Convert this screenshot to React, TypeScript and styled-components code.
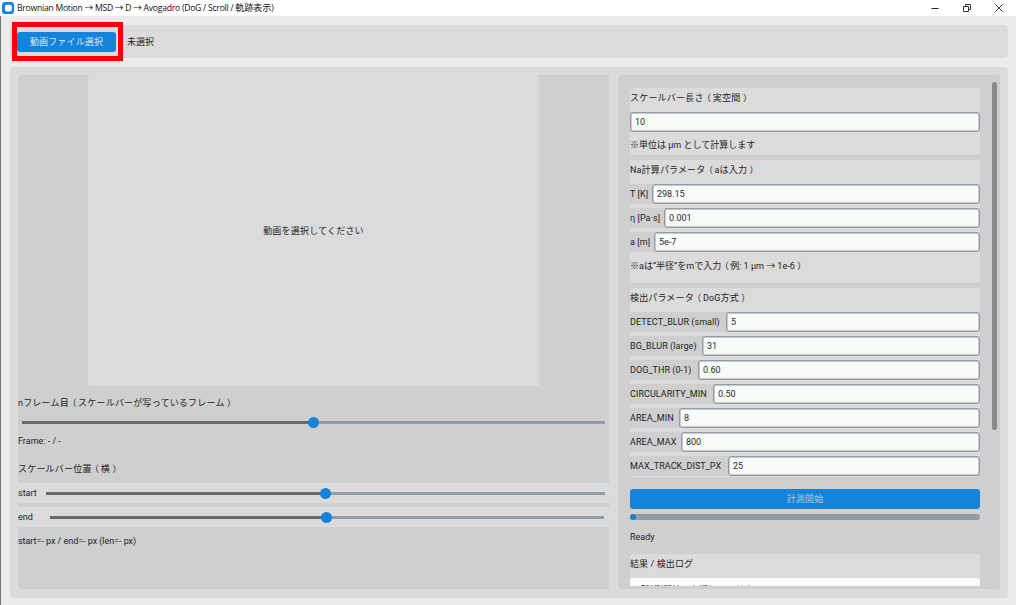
import React from 'react';
import styled, { createGlobalStyle } from 'styled-components';

const Global = createGlobalStyle`
  * { box-sizing: border-box; }
  body { margin: 0; background: #ebebeb; }
`;

const Window = styled.div`
  width: 1016px;
  height: 605px;
  overflow: hidden;
  display: flex;
  flex-direction: column;
  background: #ebebeb;
  color: #1c1f21;
  font: 9px/12px Roboto, "Noto Sans CJK JP", sans-serif;
  white-space: nowrap;
`;

const TitleBar = styled.header`
  height: 16px;
  flex: none;
  display: flex;
  align-items: center;
  background: #fff;
  padding: 0 13px 0 2px;
  gap: 3px;
`;

const Title = styled.h1`
  flex: 1;
  margin: 0;
  font: 400 8.6px/14px "Open Sans", "Noto Sans CJK JP", sans-serif;
  letter-spacing: -0.24px;
  color: #111;
`;

const TitleCjk = styled.span`
  font-size: 9px;
  letter-spacing: 0;
`;

const WindowButtons = styled.div`
  display: flex;
  gap: 24px;
  svg { display: block; }
`;

const Body = styled.main`
  flex: 1;
  display: flex;
  flex-direction: column;
  gap: 9px;
  padding: 9px 8px 7px 9px;
  border-left: 1px solid #747474;
`;

const TopBar = styled.section`
  height: 33px;
  flex: none;
  display: flex;
  align-items: center;
  gap: 4px;
  padding-left: 2px;
  border-radius: 4px;
  background: #dbdbdb;
`;

const Highlight = styled.div`
  width: 111px;
  height: 39px;
  flex: none;
  padding: 5px 2px 4px 0;
  border: 5px solid #fb0004;
  display: flex;
`;

const Button = styled.button<{ $dim?: boolean }>`
  flex: 1;
  height: 20px;
  border: 0;
  border-radius: 3px;
  padding: 0;
  background: #1583d9;
  color: ${p => (p.$dim ? '#b9c6d0' : '#dce9f4')};
  font: inherit;
  letter-spacing: 0.15px;
`;

const Panels = styled.section`
  height: 531px;
  display: flex;
  gap: 9px;
  padding: 8px 8px 9px;
  border-radius: 4px;
  background: #dbdbdb;
`;

const Viewer = styled.div`
  width: 591px;
  flex: none;
  display: flex;
  flex-direction: column;
  border-radius: 4px;
  background: #cfcfcf;
`;

const Preview = styled.div`
  width: 451px;
  height: 311px;
  margin-left: 70px;
  display: flex;
  align-items: center;
  justify-content: center;
  border-radius: 3px;
  background: #dbdbdb;
`;

const Text = styled.div<{ $h: number; $ls?: number }>`
  height: ${p => p.$h}px;
  line-height: ${p => p.$h}px;
  flex: none;
  letter-spacing: ${p => p.$ls ?? 0}px;
`;

const OpenParen = styled.span`
  margin: 0 1.5px 0 -1.5px;
`;

const CloseParen = styled.span`
  margin-left: 2.5px;
`;

const SliderRow = styled.div<{ $band?: boolean; $right: number }>`
  height: 20px;
  flex: none;
  display: flex;
  align-items: center;
  padding-right: ${p => p.$right}px;
  background: ${p => (p.$band ? '#dbdbdb' : 'transparent')};
`;

const SliderLabel = styled.span<{ $w: number }>`
  width: ${p => p.$w}px;
  flex: none;
`;

const Track = styled.div`
  flex: 1;
  height: 3px;
  display: flex;
  align-items: center;
  background: #929ca4;
`;

const Fill = styled.div<{ $w: number }>`
  width: ${p => p.$w}px;
  height: 3px;
  background: #696969;
`;

const Knob = styled.div`
  width: 11px;
  height: 11px;
  margin-left: -6px;
  border-radius: 50%;
  background: #1583d9;
`;

const Gap = styled.div<{ $h: number }>`
  height: ${p => p.$h}px;
  flex: none;
`;

const Settings = styled.div`
  flex: 1;
  display: flex;
  justify-content: space-between;
  padding: 7px 3px 3px 12px;
  border-radius: 4px;
  background: #cfcfcf;
`;

const Scroller = styled.div`
  width: 350px;
  display: flex;
  flex-direction: column;
  overflow: hidden;
  padding-top: 6px;
`;

const ScrollThumb = styled.div`
  width: 5px;
  height: 348px;
  border-radius: 3px;
  background: #8b8b8b;
`;

const Group = styled.section<{ $h: number }>`
  height: ${p => p.$h}px;
  flex: none;
  display: flex;
  flex-direction: column;
  border-radius: 3px;
  background: #dbdbdb;
`;

const Field = styled.label`
  height: 20px;
  flex: none;
  display: flex;
  align-items: center;
  margin-bottom: 4px;
  background: #cfcfcf;
`;

const FieldLabel = styled.span<{ $w: number }>`
  width: ${p => p.$w}px;
  flex: none;
  letter-spacing: 0.06px;
`;

const Input = styled.input`
  flex: 1;
  min-width: 0;
  height: 20px;
  padding: 0 4px;
  border: 1px solid #959ba4;
  box-shadow: inset 0 0 0 0.5px #959ba4;
  border-radius: 3px;
  background: #f8fbfa;
  color: #26292b;
  font: inherit;
  outline: 0;
`;

const Progress = styled.div`
  height: 6px;
  flex: none;
  border-radius: 3px;
  background: #929ca6;
`;

const ProgressFill = styled.div`
  width: 6px;
  height: 6px;
  border-radius: 3px;
  background: #1583d9;
`;

const Log = styled.div`
  height: 60px;
  flex: none;
  padding: 6px 6px;
  border-radius: 3px 3px 0 0;
  background: #f8fbfa;
`;

const Param = ({ label, w, value }: { label: string; w: number; value: string }) => (
  <Field>
    <FieldLabel $w={w}>{label}</FieldLabel>
    <Input defaultValue={value} />
  </Field>
);

const detection = [
  { label: 'DETECT_BLUR (small)', w: 96, value: '5' },
  { label: 'BG_BLUR (large)', w: 72, value: '31' },
  { label: 'DOG_THR (0-1)', w: 68, value: '0.60' },
  { label: 'CIRCULARITY_MIN', w: 83, value: '0.50' },
  { label: 'AREA_MIN', w: 49, value: '8' },
  { label: 'AREA_MAX', w: 51, value: '800' },
  { label: 'MAX_TRACK_DIST_PX', w: 98, value: '25' },
];

export default function App() {
  return (
    <Window>
      <Global />
      <TitleBar>
        <svg width="12" height="12" viewBox="0 0 12 12">
          <rect x="0" y="0" width="12" height="12" rx="3" fill="#1583e6" />
          <rect x="3" y="2.8" width="6.8" height="6.8" rx="2" fill="#fff" />
        </svg>
        <Title>
          Brownian Motion → MSD → D → Avogadro (DoG / Scroll / <TitleCjk>軌跡表示</TitleCjk>)
        </Title>
        <WindowButtons>
          <svg width="8" height="9" viewBox="0 0 8 9"><path d="M0.5 4.5H7.5" stroke="#222" /></svg>
          <svg width="8" height="9" viewBox="0 0 8 9" fill="none" stroke="#333">
            <path d="M.5 2.5h5v5h-5zM2.5 2.5V.5h5v5H6" />
          </svg>
          <svg width="8" height="9" viewBox="0 0 8 9"><path d="M.5 .5l7 7M7.5 .5l-7 7" stroke="#333" /></svg>
        </WindowButtons>
      </TitleBar>
      <Body>
        <TopBar>
          <Highlight><Button>動画ファイル選択</Button></Highlight>
          <span>未選択</span>
        </TopBar>
        <Panels>
          <Viewer>
            <Preview><Text $h={12} $ls={0.2}>動画を選択してください</Text></Preview>
            <Gap $h={8} />
            <Text $h={18} $ls={0.2}>nフレーム目<OpenParen>（</OpenParen>スケールバーが写っているフレーム<CloseParen>）</CloseParen></Text>
            <SliderRow $right={4}>
              <SliderLabel $w={4} />
              <Track><Fill $w={292} /><Knob /></Track>
            </SliderRow>
            <Text $h={18}>Frame: - / -</Text>
            <Gap $h={10} />
            <Text $h={18} $ls={0.2}>スケールバー位置<OpenParen>（</OpenParen>横<CloseParen>）</CloseParen></Text>
            <Gap $h={5} />
            <SliderRow $band $right={4}>
              <SliderLabel $w={28}>start</SliderLabel>
              <Track><Fill $w={280} /><Knob /></Track>
            </SliderRow>
            <Gap $h={4} />
            <SliderRow $band $right={5}>
              <SliderLabel $w={32}>end</SliderLabel>
              <Track><Fill $w={277} /><Knob /></Track>
            </SliderRow>
            <Gap $h={5} />
            <Text $h={18} $ls={-0.04}>start=- px / end=- px (len=- px)</Text>
          </Viewer>
          <Settings>
            <Scroller>
              <Group $h={67}>
                <Text $h={20} $ls={0.2}>スケールバー長さ<OpenParen>（</OpenParen>実空間<CloseParen>）</CloseParen></Text>
                <Gap $h={4} />
                <Field><Input defaultValue="10" /></Field>
                <Text $h={18}>※単位は μm として計算します</Text>
              </Group>
              <Gap $h={5} />
              <Group $h={123}>
                <Text $h={20} $ls={0.15}>Na計算パラメータ<OpenParen>（</OpenParen>aは入力<CloseParen>）</CloseParen></Text>
                <Gap $h={4} />
                <Param label="T [K]" w={22} value="298.15" />
                <Param label="η [Pa·s]" w={34} value="0.001" />
                <Param label="a [m]" w={24} value="5e-7" />
                <Text $h={20}>※aは“半径”をmで入力<OpenParen>（</OpenParen>例: 1 μm → 1e-6<CloseParen>）</CloseParen></Text>
              </Group>
              <Gap $h={5} />
              <Group $h={189}>
                <Text $h={20} $ls={0.15}>検出パラメータ<OpenParen>（</OpenParen>DoG方式<CloseParen>）</CloseParen></Text>
                <Gap $h={4} />
                {detection.map(d => <Param key={d.label} {...d} />)}
              </Group>
              <Gap $h={12} />
              <Field><Button $dim>計測開始</Button></Field>
              <Gap $h={1} />
              <Progress><ProgressFill /></Progress>
              <Gap $h={8} />
              <Text $h={18}>Ready</Text>
              <Gap $h={8} />
              <Group $h={90}>
                <Text $h={20} $ls={0.1}>結果 / 検出ログ</Text>
                <Gap $h={4} />
                <Log>「計測開始」を押してください</Log>
              </Group>
            </Scroller>
            <ScrollThumb />
          </Settings>
        </Panels>
      </Body>
    </Window>
  );
}
